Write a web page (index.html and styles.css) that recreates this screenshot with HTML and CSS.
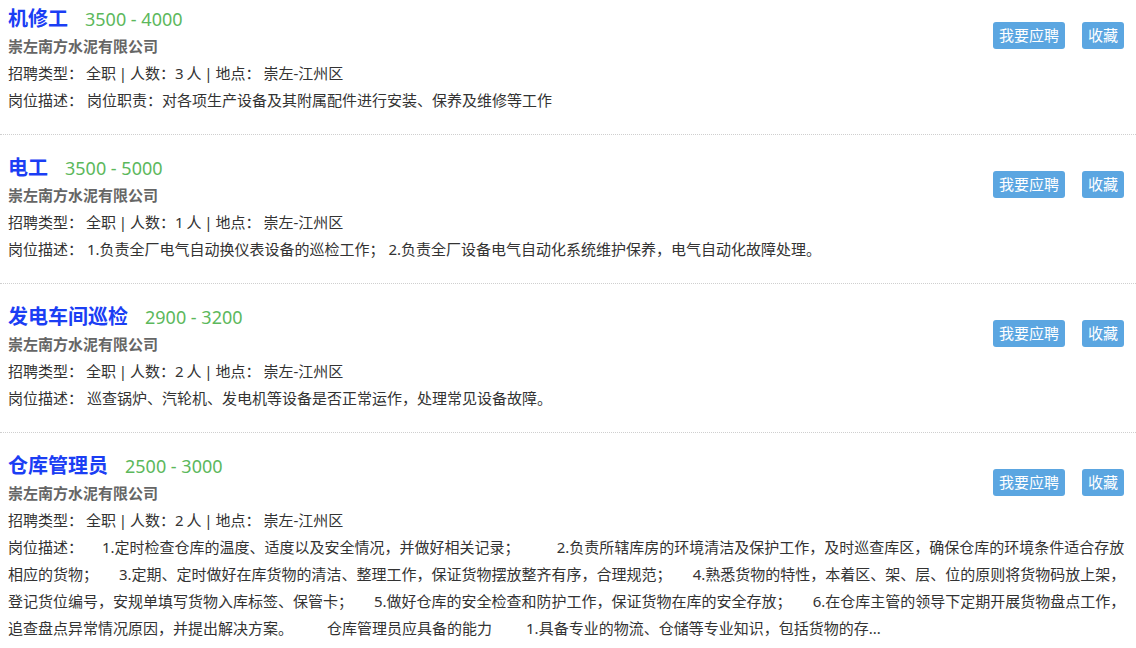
FILE: index.html
```html
<!DOCTYPE html>
<html lang="zh-CN">
<head>
<meta charset="utf-8">
<title>招聘职位</title>
<link rel="stylesheet" href="styles.css">
</head>
<body>
<ul class="job-list">
  <li class="job">
    <div class="actions"><a class="btn" href="#">我要应聘</a><a class="btn" href="#">收藏</a></div>
    <div class="job-head"><a class="job-title" href="#">机修工</a><span class="salary">3500 - 4000</span></div>
    <div class="company">崇左南方水泥有限公司</div>
    <div class="meta">招聘类型： 全职 | 人数：3 人 | 地点： 崇左-江州区</div>
    <div class="desc">岗位描述： 岗位职责：对各项生产设备及其附属配件进行安装、保养及维修等工作</div>
  </li>
  <li class="job">
    <div class="actions"><a class="btn" href="#">我要应聘</a><a class="btn" href="#">收藏</a></div>
    <div class="job-head"><a class="job-title" href="#">电工</a><span class="salary">3500 - 5000</span></div>
    <div class="company">崇左南方水泥有限公司</div>
    <div class="meta">招聘类型： 全职 | 人数：1 人 | 地点： 崇左-江州区</div>
    <div class="desc">岗位描述： 1.负责全厂电气自动换仪表设备的巡检工作； 2.负责全厂设备电气自动化系统维护保养，电气自动化故障处理。</div>
  </li>
  <li class="job">
    <div class="actions"><a class="btn" href="#">我要应聘</a><a class="btn" href="#">收藏</a></div>
    <div class="job-head"><a class="job-title" href="#">发电车间巡检</a><span class="salary">2900 - 3200</span></div>
    <div class="company">崇左南方水泥有限公司</div>
    <div class="meta">招聘类型： 全职 | 人数：2 人 | 地点： 崇左-江州区</div>
    <div class="desc">岗位描述： 巡查锅炉、汽轮机、发电机等设备是否正常运作，处理常见设备故障。</div>
  </li>
  <li class="job">
    <div class="actions"><a class="btn" href="#">我要应聘</a><a class="btn" href="#">收藏</a></div>
    <div class="job-head"><a class="job-title" href="#">仓库管理员</a><span class="salary">2500 - 3000</span></div>
    <div class="company">崇左南方水泥有限公司</div>
    <div class="meta">招聘类型： 全职 | 人数：2 人 | 地点： 崇左-江州区</div>
    <div class="desc">岗位描述：<span class="gap gap-s"></span>1.定时检查仓库的温度、适度以及安全情况，并做好相关记录；<span class="gap gap-xl"></span>2.负责所辖库房的环境清洁及保护工作，及时巡查库区，确保仓库的环境条件适合存放相应的货物；<span class="gap gap-m"></span>3.定期、定时做好在库货物的清洁、整理工作，保证货物摆放整齐有序，合理规范；<span class="gap gap-m"></span>4.熟悉货物的特性，本着区、架、层、位的原则将货物码放上架，登记货位编号，安规单填写货物入库标签、保管卡；<span class="gap gap-m"></span>5.做好仓库的安全检查和防护工作，保证货物在库的安全存放；<span class="gap gap-m"></span>6.在仓库主管的领导下定期开展货物盘点工作，追查盘点异常情况原因，并提出解决方案。<span class="gap gap-l"></span>仓库管理员应具备的能力<span class="gap gap-l"></span>1.具备专业的物流、仓储等专业知识，包括货物的存...</div>
  </li>
</ul>
</body>
</html>
```

FILE: styles.css
```css
html, body {
  margin: 0;
  padding: 0;
  background: #fff;
}

body {
  font-family: "Noto Sans", "Noto Sans CJK SC", sans-serif;
  font-size: 15px;
  color: #333;
}

.job-list {
  list-style: none;
  margin: 0;
  padding: 0;
}

.job {
  padding: 18px 8px 20px;
  border-top: 1px dotted #cfcfcf;
}

.job:first-child {
  padding-top: 4px;
  border-top: none;
}

.actions {
  float: right;
  margin: 18px 4px 0 0;
  display: flex;
  gap: 17px;
}

.btn {
  display: block;
  height: 27px;
  line-height: 27px;
  padding: 0 6px;
  background: #5ba6e1;
  color: #fff;
  font-size: 15px;
  text-decoration: none;
  border-radius: 3px;
}

.job-head {
  line-height: 29px;
  height: 29px;
}

.job-title {
  font-size: 20px;
  font-weight: bold;
  color: #1b3ef4;
  text-decoration: none;
}

.salary {
  margin-left: 17px;
  font-size: 18px;
  color: #5cb85c;
}

.company {
  line-height: 27px;
  font-weight: bold;
  color: #666;
}

.meta,
.desc {
  line-height: 27px;
  color: #333;
}

.meta {
  word-spacing: -1px;
}

.gap {
  display: inline-block;
}

.gap-s { width: 19px; }
.gap-m { width: 21px; }
.gap-l { width: 34px; }
.gap-xl { width: 37px; }
```
